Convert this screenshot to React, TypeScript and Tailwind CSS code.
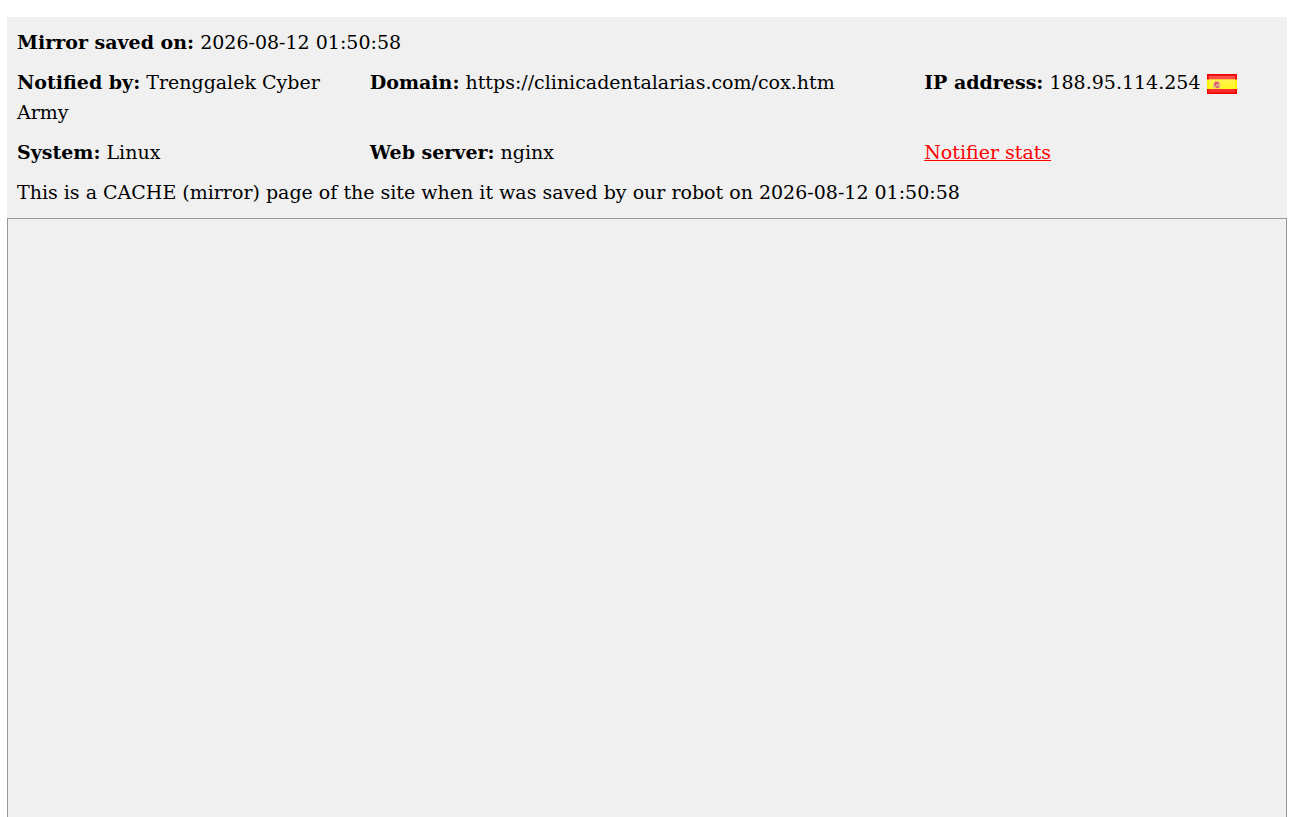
import React from "react";

function Field({ label, children, className }: { label: string; children: React.ReactNode; className: string }) {
  return (
    <p className={className}>
      <strong className="font-bold">{label}</strong> {children}
    </p>
  );
}

function SpainFlag() {
  return (
    <svg viewBox="0 0 30 20" role="img" aria-label="Spain" className="inline-block h-5 w-[30px] align-middle">
      <defs>
        <linearGradient id="flag-red" x1="0" y1="0" x2="0" y2="1">
          <stop offset="0" stopColor="#ff5050" />
          <stop offset="1" stopColor="#fa2828" />
        </linearGradient>
        <linearGradient id="flag-yellow" x1="0" y1="0" x2="0" y2="1">
          <stop offset="0" stopColor="#fff450" />
          <stop offset="1" stopColor="#fff820" />
        </linearGradient>
      </defs>
      <rect width="30" height="20" fill="#ee0000" />
      <rect x="1" y="1" width="28" height="18" fill="#f51818" />
      <rect x="2" y="2" width="26" height="16" fill="url(#flag-red)" />
      <rect y="5.500" width="30" height="9.500" fill="#fcf000" />
      <rect x="2" y="5.500" width="26" height="9.500" fill="url(#flag-yellow)" />
      <path d="M6 9h1.500v5H6zM12 9h1.500v5H12z" fill="#dccb88" />
      <rect x="7" y="7" width="5.500" height="7.500" rx="1.500" fill="#eab878" />
      <path d="M8 8h3.500v3H10V10H9v2H7.500V9z" fill="#e05a60" />
      <path d="M9 12h3v2H9z" fill="#dd7070" />
      <path d="M9 10h1.500v1.500H9z" fill="#c8b0c0" />
    </svg>
  );
}

export default function App() {
  return (
    <main className="flex min-h-screen flex-col bg-white pt-[17px] pr-[19px] pl-[7px] font-['DejaVu_Serif',serif] text-[19px] leading-[30px] text-black">
      <header className="flex flex-col gap-[10px] bg-[#f0f0f0] px-[10px] pt-[10px] pb-[11px]">
        <Field label="Mirror saved on:" className="w-full">2026-08-12 01:50:58</Field>
        <div className="flex">
          <Field label="Notified by:" className="w-[28%] pr-5">Trenggalek Cyber Army</Field>
          <Field label="Domain:" className="w-[44%]">https://clinicadentalarias.com/cox.htm</Field>
          <Field label="IP address:" className="w-[28%]">188.95.114.254 <SpainFlag /></Field>
        </div>
        <div className="flex">
          <Field label="System:" className="w-[28%]">Linux</Field>
          <Field label="Web server:" className="w-[44%]">nginx</Field>
          <p className="w-[28%]"><a href="#stats" className="text-[#ff0000] underline">Notifier stats</a></p>
        </div>
        <p>This is a CACHE (mirror) page of the site when it was saved by our robot on 2026-08-12 01:50:58</p>
      </header>
      <section aria-label="Saved page" className="flex-1 border border-b-0 border-[#999999] bg-[#f0f0f0]" />
    </main>
  );
}
